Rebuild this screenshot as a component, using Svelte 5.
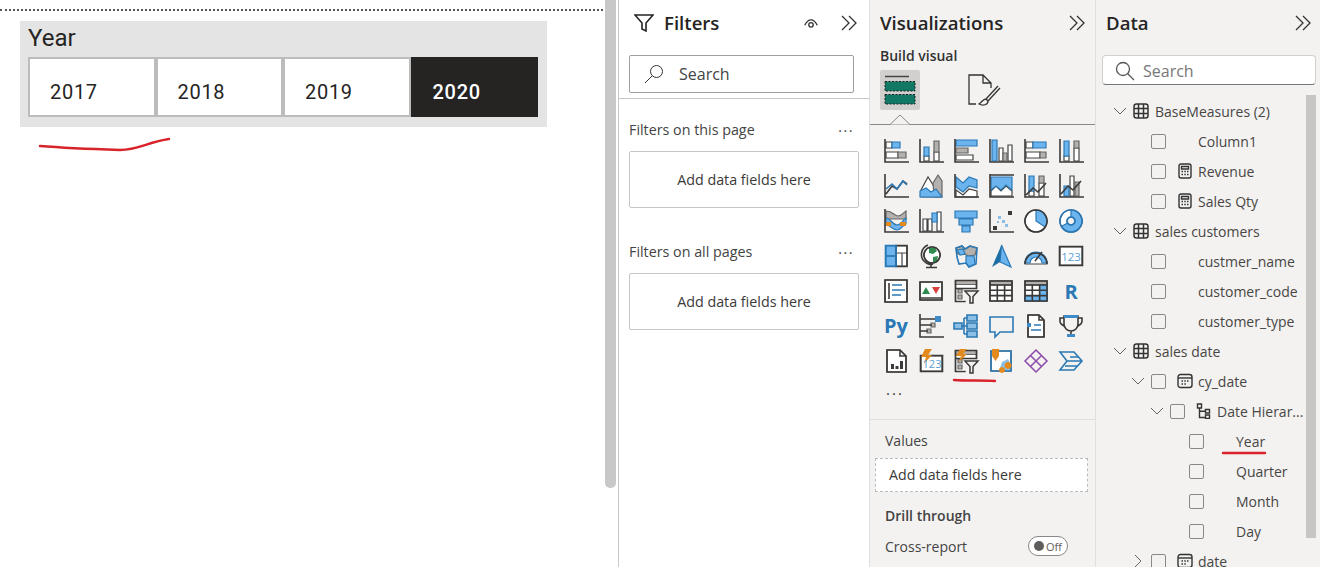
<script>
  const years = [
    { label: '2017', on: false },
    { label: '2018', on: false },
    { label: '2019', on: false },
    { label: '2020', on: true }
  ];

  const axis = 'M1 0v23h24';
  const slicer = 'M1.500 1.500h21v8h-21zM1.500 9.500v13h10';
  const slicerKeys = 'M1.500 1.500h21v4h-21zM4 10h4v4H4zM4 16h4v4H4z';
  const funnel = 'M11 12h13l-5 5.500v6.500h-3v-6.500z';

  // one entry per icon, the keys are the paint layers
  const icons = [
    { w: 'M2 3h6v6H2zM2 13h12v6H2z', b: 'M8 3h8v6H8z', g: 'M14 13h8v6h-8z', k: axis },
    { w: 'M5 17h5v5H5zM15 13h5v9h-5z', b: 'M5 8h5v9H5z', g: 'M15 2h5v11h-5z', k: axis },
    { w: 'M2 16h17v5H2z', b: 'M2 1h21v6H2z', g: 'M2 9h12v5H2z', k: axis },
    { w: 'M10 9h4v13h-4zM19 6h4v16h-4z', b: 'M3 1h5v21H3z', g: 'M14 14h4v8h-4z', k: axis },
    { w: 'M2 3h7v6H2zM2 13h14v6H2z', b: 'M9 3h13v6H9z', g: 'M16 13h6v6h-6z', k: axis },
    { w: 'M5 17h5v5H5zM15 9h5v13h-5z', b: 'M5 2h5v15H5z', g: 'M15 2h5v7h-5z', k: axis },

    { k: 'M1 0v23h24M2 20l6-8 5 3 6-8 4 3', t: 'M2 15l6-5 5 5 6-8 4 4' },
    { g: 'M14 9l5-8 4 6v16h-8z', w: 'M2 16L9 3l7 11 5 9H2z', b: 'M1 23v-6l6-3 5 4 5-3 6 8z' },
    { b: 'M2 3l7 6 6-6 8 3v8l-8-2-6 6-7-5z', w: 'M2 16l7 5 6-6 8 2v6H2z', k: 'M1 0v23h24' },
    { b: 'M2 3h21v13l-6-5-5 5-5-4-5 4z', w: 'M2 17l5-5 5 5 5-5 6 5v5H2z', k: 'M1 1h24M1 0v23h24' },
    { w: 'M5 17h5v5H5zM15 9h5v13h-5z', b: 'M5 2h5v15H5z', g: 'M15 2h5v7h-5z', k: 'M1 0v23h24M2 21l7-7 5 4 8-9' },
    { w: 'M11 2h4v20h-4z', b: 'M5 12h5v10H5z', g: 'M16 8h4v14h-4z', k: 'M1 0v23h24M2 20l7-8 5 4 8-9' },

    { g: 'M2 2c7 0 8 5 12 5s5-3 8-5v8H2z', b: 'M2 9c5 0 6 7 11 7s6-6 9-7v6c-3 1-5 6-9 6S6 16 2 16z', o: 'M2 13h5v4H2zM16 13h6v4h-6z', k: axis },
    { w: 'M4 10h4v12H4zM9 10h4v12H9zM18 3h4v19h-4z', b: 'M13 4h5v9h-5z', k: axis },
    { b: 'M1 2h22v7H1zM5 10h14v6H5zM8 17h8v6H8z' },
    { k: 'M1 0v23h24', f: 'M19 2h4v4h-4zM4 17h4v4H4z', l: 'M9 7h3v3H9zM13 11h3v3h-3zM16 15h3v3h-3zM8 12h2v2H8z' },
    { w: 'M12 1a11 11 0 1 0 11 11z', b: 'M12 1a11 11 0 0 1 9 17l-9-6z', k: 'M12 1a11 11 0 1 0 .01 0z' },
    { w: 'M12 1a11 11 0 1 0 .01 0zM12 8a4 4 0 1 0 .01 0z', b: 'M12 1a11 11 0 1 1-9.500 16.500l6-3.500a4 4 0 1 0 3.500-6z', t: 'M12 1a11 11 0 1 0 .01 0zM12 8a4 4 0 1 0 .01 0z' },

    { b: 'M2 2h10v10H2zM2 12h10v10H2z', w: 'M12 2h11v7H12zM12 9h6v13h-6zM18 9h5v13h-5z', k: 'M12 1.500h11v21H12z', t: 'M1.500 1.500H12v21H1.500zM1.500 12H12' },
    { w: 'M13 3a8 8 0 1 0 .01 0z', n: 'M10 4l6 0 2 3-4 3-4-1zM14 13l5-1-1 5-4 2z', k: 'M13 3a8 8 0 1 0 .01 0zM9 1a10 10 0 0 0-3 17c2 2 6 3 8 2M12 20v3M7 23.500h11' },
    { g: 'M2 4l6-2 3 3 5-3 7 2-2 7-7 1-5-3-6 1z', b: 'M12 12l8 0 1 8-6 3-3-4zM3 6l6-1 2 5-5 1z', t: 'M2 4l6-2 3 3 5-3 7 2-1 16-7 3-3-4-7 1-2-7z' },
    { a: 'M12.500 1L3 23l8-5z', b: 'M12.500 1L22 23l-11-5z' },
    { w: 'M1 20a11 11 0 1 1 22 0z', b: 'M1 19a11 11 0 0 1 22 0h-5a6 6 0 0 0-12 0z', k: 'M1 20a11 11 0 1 1 22 0M11 17l7-9' },
    { w: 'M1 3h22v18H1z', k: 'M.500 2.500h23v19H.500z', txt: '123', size: 11.500, x: 12, y: 16.500, cls: 'tl' },

    { w: 'M1 1h22v22H1z', t: 'M8 6h10M8 11h13M8 16h9', k: 'M1 1h22v22H1zM5 4v16' },
    { w: 'M1 3h22v18H1z', n: 'M3 15l4-7 4 7z', r: 'M13 8h8l-4 7z', k: 'M1 3h22v18H1zM1 19h22' },
    { w: slicer, g: slicerKeys, k: slicer, z: funnel },
    { w: 'M1 2h22v20H1z', g: 'M1 2h22v4H1z', k: 'M1 2h22v20H1zM1 6h22M1 11.300h22M1 16.600h22M8.300 6v16M15.600 6v16' },
    { w: 'M1 2h22v20H1z', g: 'M1 2h22v4H1z', b: 'M15.600 6H23v16h-7.400zM1 16.600h14.600V22H1z', k: 'M1 2h22v20H1zM1 6h22M1 11.300h22M1 16.600h22M8.300 6v16M15.600 6v16' },
    { txt: 'R', size: 20, x: 12, y: 19.500, cls: 'tb' },

    { txt: 'Py', size: 20, x: 12, y: 18.500, cls: 'tb' },
    { k: 'M1 0v23h24M1 5h15M1 11h12M1 17h8', q: 'M16 2h6v6h-6z', g: 'M12 9h4v4h-4zM8 15h4v4H8z' },
    { l: 'M0 9h8v6H0zM13 1h10v6H13zM13 9h10v6H13zM13 17h10v6H13z', t: 'M8 12h5M10 4v16M10 4h3M10 20h3M0 9h8v6H0zM13 1h10v6H13zM13 9h10v6H13zM13 17h10v6H13z' },
    { t: 'M1 3h23v15H11l-5 5v-5H1z' },
    { w: 'M4 1h11l5 5v17H4z', k: 'M4 1h11l5 5v17H4zM15 1v5h5', t: 'M10 11h7M7 16h10', q: 'M3 9h4v4H3z' },
    { k: 'M5 2h14v8a7 7 0 0 1-14 0zM5 4H1v3c0 3 2 4 4 5M19 4h4v3c0 3-2 4-4 5M12 17v3', q: 'M5 1h14v3H5zM8 20h8v3H8z' },

    { w: 'M3 1h13l6 6v16H3z', k: 'M3 1h13l6 6v16H3zM16 1v6h6', f: 'M7 15h3v5H7zM11.500 17h3v3h-3zM16 12h3v8h-3z' },
    { w: 'M2 7h21v15H2z', k: 'M1.500 6.500h22v16h-22z', txt: '123', size: 11, x: 13, y: 18.500, cls: 'tl', o: 'M6 0h7l-4 6h4L5 15l2-7H2z' },
    { w: slicer, g: slicerKeys, k: slicer, z: funnel, o: 'M6 0h7l-4 5h4L5 13l2-6H2z' },
    { w: 'M2 2h20v20H2z', l: 'M10 22l3-9 6-3 3 6v6z', t: 'M2 2h20v20H2z', o: 'M3 0h7v7l-3.500 5L3 7zM19 13a3.500 3.500 0 1 0 .01 0zM13 18a3 3 0 1 0 .01 0z' },
    { p: 'M12 1l11 11-11 11L1 12zM6.500 6.500l11 11M17.500 6.500l-11 11' },
    { t: 'M1 3h14l8 9-8 9H1l7-9zM8 12h15M11 8h8M6 17h12' }
  ];

  const tree = [
    { kind: 'table', name: 'BaseMeasures (2)' },
    { pad: 35, name: 'Column1' },
    { pad: 35, icon: 'calc', name: 'Revenue' },
    { pad: 35, icon: 'calc', name: 'Sales Qty' },
    { kind: 'table', name: 'sales customers' },
    { pad: 35, name: 'custmer_name' },
    { pad: 35, name: 'customer_code' },
    { pad: 35, name: 'customer_type' },
    { kind: 'table', name: 'sales date' },
    { pad: 35, open: true, icon: 'cal', name: 'cy_date' },
    { pad: 54, open: true, icon: 'hier', name: 'Date Hierar...' },
    { pad: 73, name: 'Year' },
    { pad: 73, name: 'Quarter' },
    { pad: 73, name: 'Month' },
    { pad: 73, name: 'Day' },
    { pad: 35, closed: true, icon: 'cal', name: 'date' }
  ];
</script>

{#snippet doubleChevron()}
  <svg class="collapse" viewBox="0 0 16 16">
    <path d="M1 1l7 7-7 7M8 1l7 7-7 7" />
  </svg>
{/snippet}

{#snippet zone(title)}
  <div class="zone-head">
    <span>{title}</span>
    <span class="more">...</span>
  </div>
  <div class="zone-box">Add data fields here</div>
{/snippet}

<div class="page">
  <section class="canvas">
    <div class="dotted"></div>
    <div class="slicer">
      <div class="slicer-title">Year</div>
      <div class="tiles">
        {#each years as y}
          <div class="tile" class:on={y.on}>{y.label}</div>
        {/each}
      </div>
    </div>
    <div class="canvas-scroll"></div>
  </section>

  <section class="filters">
    <div class="filters-top">
      <header class="head">
        <svg class="funnel" viewBox="0 0 20 20">
          <path d="M1 2h18l-7 8v8l-4-2v-6z" />
        </svg>
        <h2>Filters</h2>
        <svg class="eye" viewBox="0 0 18 12">
          <path d="M2 8c4-8 10-8 14 0" />
          <circle cx="9" cy="7.500" r="2.500" />
        </svg>
        {@render doubleChevron()}
      </header>
      <div class="filter-search">
        <svg viewBox="0 0 20 20">
          <circle cx="12.500" cy="7.500" r="6" />
          <path d="M8 12l-7 7" />
        </svg>
        <span>Search</span>
      </div>
    </div>
    {@render zone('Filters on this page')}
    {@render zone('Filters on all pages')}
  </section>

  <section class="viz">
    <header class="head">
      <h2>Visualizations</h2>
      {@render doubleChevron()}
    </header>
    <div class="build">Build visual</div>
    <div class="tabs">
      <div class="tab-on">
        <svg viewBox="0 0 32 32">
          <path class="tab-line" d="M1 2.500h24" />
          <rect class="tab-bar" x="1" y="7.500" width="30" height="9.500" />
          <rect class="tab-bar" x="1" y="20.500" width="30" height="9.500" />
        </svg>
      </div>
      <svg class="tab-format" viewBox="0 0 34 34">
        <path d="M9 31H2V2h14l8 8v5M16 2v8h8" />
        <path d="M31 13L19 26M33 15L21 28M19 26c-3 0-4 3-7 5 4 2 9 1 9-3z" />
      </svg>
      <svg class="notch" viewBox="0 0 22 11">
        <path d="M0 10.500h1L11 1l10 9.500h1" />
      </svg>
    </div>

    <div class="gallery">
      {#each icons as ic}
        <svg viewBox="0 0 24 24">
          {#if ic.w}<path class="w" d={ic.w} />{/if}
          {#if ic.g}<path class="g" d={ic.g} />{/if}
          {#if ic.b}<path class="b" d={ic.b} />{/if}
          {#if ic.a}<path class="a" d={ic.a} />{/if}
          {#if ic.l}<path class="l" d={ic.l} />{/if}
          {#if ic.n}<path class="n" d={ic.n} />{/if}
          {#if ic.r}<path class="r" d={ic.r} />{/if}
          {#if ic.k}<path class="k" d={ic.k} />{/if}
          {#if ic.z}<path class="z" d={ic.z} />{/if}
          {#if ic.f}<path class="f" d={ic.f} />{/if}
          {#if ic.t}<path class="t" d={ic.t} />{/if}
          {#if ic.q}<path class="q" d={ic.q} />{/if}
          {#if ic.p}<path class="p" d={ic.p} />{/if}
          {#if ic.o}<path class="o" d={ic.o} />{/if}
          {#if ic.txt}<text class={ic.cls} x={ic.x} y={ic.y} font-size={ic.size}>{ic.txt}</text>{/if}
        </svg>
      {/each}
    </div>
    <div class="gallery-more">...</div>

    <div class="wells">
      <div class="well-label">Values</div>
      <div class="well">Add data fields here</div>
      <div class="drill">Drill through</div>
      <div class="cross">
        <span>Cross-report</span>
        <span class="toggle"><i></i>Off</span>
      </div>
    </div>
  </section>

  <section class="data">
    <header class="head">
      <h2>Data</h2>
      {@render doubleChevron()}
    </header>
    <div class="data-search">
      <svg viewBox="0 0 20 20">
        <circle cx="8" cy="8" r="6.500" />
        <path d="M12.500 12.500l6.500 6.500" />
      </svg>
      <span>Search</span>
    </div>
    <div class="tree">
      {#each tree as row}
        {#if row.kind === 'table'}
          <div class="row row-table">
            <svg class="chev" viewBox="0 0 14 8"><path d="M1 1l6 6 6-6" /></svg>
            <svg class="table-ic" viewBox="0 0 16 16">
              <rect x="1" y="1" width="14" height="14" rx="2.500" />
              <path d="M5.500 1v14M10.500 1v14M1 5.500h14M1 10.500h14" />
            </svg>
            <span>{row.name}</span>
          </div>
        {:else}
          <div class="row" style="padding-left: {row.pad}px">
            <span class="chev-slot">
              {#if row.open}
                <svg class="chev" viewBox="0 0 14 8"><path d="M1 1l6 6 6-6" /></svg>
              {:else if row.closed}
                <svg class="chev-r" viewBox="0 0 8 14"><path d="M1 1l6 6-6 6" /></svg>
              {/if}
            </span>
            <span class="check"></span>
            <span class="field-ic">
              {#if row.icon === 'calc'}
                <svg viewBox="0 0 16 16">
                  <rect x="2" y="1" width="12" height="14" rx="2" />
                  <path d="M4.500 3.500h7v2.500h-7z" />
                  <path class="dots" d="M4.500 8.500h1.500M7.300 8.500h1.500M10 8.500h1.500M4.500 11.500h1.500M7.300 11.500h1.500M10 11.500h1.500" />
                </svg>
              {:else if row.icon === 'cal'}
                <svg viewBox="0 0 16 16">
                  <rect x="1" y="1.500" width="14" height="13" rx="2.500" />
                  <path d="M1 5h14" />
                  <path class="dots" d="M4.500 8h1.500M7.300 8h1.500M10 8h1.500M4.500 11h1.500M7.300 11h1.500" />
                </svg>
              {:else if row.icon === 'hier'}
                <svg viewBox="0 0 16 16">
                  <path d="M1.500 1h4v4h-4zM9.500 6.500h4v3.500h-4zM9.500 12h4v3.500h-4zM3.500 5v9.500h6M3.500 8.200h6" />
                </svg>
              {/if}
            </span>
            <span>{row.name}</span>
          </div>
        {/if}
      {/each}
    </div>
    <div class="data-scroll"></div>
  </section>

  <svg class="ink" viewBox="0 0 1320 567">
    <path d="M40 146c25 2 50 3 80 4 18 0 28-8 49-11" />
    <path d="M954 380c14 1 28 0 41 1" />
    <path d="M1223 453h42" />
  </svg>
</div>

<style>
  :global(body) {
    margin: 0;
    background: #fff;
  }

  .page {
    position: relative;
    width: 1320px;
    height: 567px;
    overflow: hidden;
    display: grid;
    grid-template-columns: 619px 251px 226px 224px;
    font-family: "Open Sans", "Noto Sans", sans-serif;
    color: #3b3a39;
    font-size: 14px;
  }

  section {
    position: relative;
    height: 567px;
    box-sizing: border-box;
  }

  .head {
    display: flex;
    align-items: center;
    height: 46px;
  }

  h2 {
    margin: -2px 0 0;
    font-size: 18.600px;
    font-weight: 600;
    color: #252423;
  }

  .collapse {
    width: 16px;
    height: 16px;
    fill: none;
    stroke: #333;
    stroke-width: 1.300;
    flex: none;
  }

  /* canvas */
  .canvas {
    background: #fff;
    border-right: 1px solid #c8c8c8;
    padding-left: 20px;
  }

  .dotted {
    margin: 9px 0 10px -20px;
    width: 603px;
    border-top: 2px dotted #555;
    height: 0;
  }

  .slicer {
    width: 527px;
    height: 106px;
    background: #e4e4e4;
    box-sizing: border-box;
    padding: 0 9px 0 8px;
  }

  .slicer-title {
    height: 36px;
    line-height: 34px;
    font-family: Roboto, sans-serif;
    font-size: 24px;
    color: #252423;
  }

  .tiles {
    display: grid;
    grid-template-columns: repeat(4, 1fr);
  }

  .tile {
    height: 60px;
    box-sizing: border-box;
    border: 2px solid #bcbcbc;
    background: #fff;
    padding-left: 20px;
    line-height: 67px;
    font-family: Roboto, sans-serif;
    font-size: 20px;
    letter-spacing: 0.700px;
    color: #252423;
  }

  .tile.on {
    background: #252423;
    border-color: #252423;
    color: #fff;
    font-weight: 500;
  }

  .canvas-scroll {
    position: absolute;
    left: 605px;
    top: 0;
    width: 11px;
    height: 488px;
    background: #c8c8c8;
    border-radius: 0 0 5px 5px;
  }

  /* filters */
  .filters {
    background: #fff;
    border-right: 1px solid #e1dfdd;
  }

  .filters-top {
    height: 99px;
    box-sizing: border-box;
    border-bottom: 1px solid #c8c6c4;
    padding: 0 12px 0 15px;
  }

  .funnel {
    width: 20px;
    height: 20px;
    margin-right: 10px;
    fill: none;
    stroke: #252423;
    stroke-width: 1.600;
  }

  .filters h2 {
    flex: 1;
  }

  .eye {
    width: 16px;
    height: 11px;
    margin-right: 22px;
    fill: none;
    stroke: #333;
    stroke-width: 1.500;
  }

  .filter-search {
    display: flex;
    align-items: center;
    gap: 15px;
    margin: 9px 0 0 -5px;
    width: 225px;
    height: 38px;
    box-sizing: border-box;
    border: 1px solid #a19f9d;
    border-radius: 2px;
    padding-left: 14px;
    font-size: 16px;
    color: #444;
  }

  .filter-search svg {
    width: 20px;
    height: 20px;
    fill: none;
    stroke: #333;
  }

  .zone-head {
    display: flex;
    justify-content: space-between;
    align-items: center;
    height: 20px;
    margin: 20px 15px 12px 10px;
    color: #444;
    font-size: 14.300px;
  }

  .zone-head + .zone-box + .zone-head {
    margin-top: 33px;
  }

  .more {
    letter-spacing: 1.500px;
    line-height: 8px;
    height: 12px;
  }

  .zone-box {
    margin-left: 10px;
    width: 230px;
    height: 57px;
    box-sizing: border-box;
    border: 1px solid #c8c6c4;
    border-radius: 2px;
    display: flex;
    align-items: center;
    justify-content: center;
    font-size: 14.300px;
  }

  /* visualizations */
  .viz {
    background: #f3f2f1;
    border-right: 1px solid #e1dfdd;
    padding: 0;
  }

  .viz .head {
    padding: 0 10px;
    justify-content: space-between;
  }

  .build {
    margin-left: 10px;
    height: 20px;
    line-height: 20px;
    font-weight: 600;
    color: #333;
  }

  .tabs {
    position: relative;
    display: flex;
    align-items: flex-start;
    gap: 47px;
    height: 55px;
    margin: 4px 0 0;
    padding-left: 10px;
    box-sizing: border-box;
    border-bottom: 1px solid #8a8886;
  }

  .tab-on {
    width: 40px;
    height: 40px;
    background: #d2d0ce;
    border-radius: 2px;
    display: flex;
    align-items: center;
    justify-content: center;
  }

  .tab-on svg {
    width: 32px;
    height: 32px;
  }

  .tab-line {
    stroke: #444;
    stroke-width: 1.500;
  }

  .tab-bar {
    fill: #117865;
    stroke: #222;
    stroke-dasharray: 2 1.500;
  }

  .tab-format {
    width: 34px;
    height: 34px;
    margin-top: 3px;
    fill: none;
    stroke: #333;
    stroke-width: 1.300;
  }

  .notch {
    position: absolute;
    left: 19px;
    bottom: -1px;
    width: 22px;
    height: 11px;
    fill: #f3f2f1;
    stroke: #8a8886;
  }

  .gallery {
    display: grid;
    grid-template-columns: repeat(6, 35px);
    grid-auto-rows: 35px;
    justify-items: center;
    align-items: center;
    margin: 8px 0 0 8px;
  }

  .gallery svg {
    width: 24px;
    height: 24px;
    overflow: visible;
  }

  .gallery path {
    stroke-width: 1.200;
    fill: none;
    fill-rule: evenodd;
  }

  .gallery .w { fill: #fff; stroke: #444; }
  .gallery .g { fill: #b3b0ad; stroke: #666; }
  .gallery .b { fill: #6cb4ee; stroke: #2b79b5; }
  .gallery .a { fill: #1c6ea4; stroke: none; }
  .gallery .l { fill: #8cbfe6; stroke: none; }
  .gallery .n { fill: #2f8c4e; stroke: none; }
  .gallery .r { fill: #d9413d; stroke: none; }
  .gallery .k { stroke: #3b3a39; stroke-width: 1.600; }
  .gallery .z { fill: #f3f2f1; stroke: #3b3a39; stroke-width: 1.500; }
  .gallery .f { fill: #3b3a39; stroke: none; }
  .gallery .t { stroke: #2b79b5; stroke-width: 1.600; }
  .gallery .q { fill: #3d8cc9; stroke: none; }
  .gallery .p { stroke: #8a4aa8; stroke-width: 1.500; }
  .gallery .o { fill: #e28a1e; stroke: none; }

  .tl,
  .tb {
    text-anchor: middle;
    font-family: "Open Sans", sans-serif;
  }

  .tl {
    fill: #5a9fd4;
  }

  .tb {
    fill: #2a78b5;
    font-weight: 700;
  }

  .gallery-more {
    margin-left: 16px;
    height: 30px;
    line-height: 22px;
    font-size: 15px;
    letter-spacing: 2px;
    color: #333;
  }

  .wells {
    margin-top: 11px;
    border-top: 1px solid #e1dfdd;
    padding: 11px 7px 0 5px;
  }

  .well-label {
    height: 20px;
    line-height: 20px;
    margin-left: 10px;
    color: #444;
  }

  .well {
    margin-top: 7px;
    height: 34px;
    width: 213px;
    box-sizing: border-box;
    background: #fff;
    border: 1px dashed #bbb;
    padding-left: 13px;
    line-height: 32px;
    font-size: 14.200px;
  }

  .drill {
    margin: 14px 0 0 10px;
    height: 20px;
    line-height: 20px;
    font-weight: 600;
    color: #444;
  }

  .cross {
    display: flex;
    justify-content: space-between;
    align-items: center;
    margin: 10px 20px 0 10px;
    height: 20px;
    color: #444;
  }

  .toggle {
    display: flex;
    align-items: center;
    gap: 2px;
    width: 40px;
    height: 20px;
    box-sizing: border-box;
    border: 1px solid #8a8886;
    border-radius: 10px;
    padding-left: 5px;
    background: #fff;
    font-size: 11px;
    color: #605e5c;
  }

  .toggle i {
    width: 10px;
    height: 10px;
    border-radius: 50%;
    background: #605e5c;
  }

  /* data */
  .data {
    background: #f3f2f1;
  }

  .data .head {
    padding: 0 9px 0 10px;
    justify-content: space-between;
  }

  .data-search {
    display: flex;
    align-items: center;
    gap: 8px;
    margin: 9px 0 0 6px;
    width: 214px;
    height: 30px;
    box-sizing: border-box;
    background: #fff;
    border: 1px solid #d2d0ce;
    border-bottom-color: #777;
    border-radius: 4px;
    padding: 2px 0 0 12px;
    font-size: 16px;
    color: #777;
  }

  .data-search svg {
    width: 20px;
    height: 20px;
    fill: none;
    stroke: #555;
    stroke-width: 1.300;
  }

  .tree {
    margin-top: 11px;
  }

  .row {
    display: flex;
    align-items: center;
    height: 30px;
    white-space: nowrap;
    color: #484644;
  }

  .row-table {
    padding-left: 17px;
  }

  .row-table .chev {
    margin-right: 6px;
  }

  .chev {
    width: 14px;
    height: 8px;
    fill: none;
    stroke: #666;
    flex: none;
  }

  .chev-r {
    width: 8px;
    height: 14px;
    fill: none;
    stroke: #666;
    margin-left: 3px;
  }

  .chev-slot {
    width: 20px;
    flex: none;
    display: flex;
    align-items: center;
  }

  .table-ic {
    width: 16px;
    height: 16px;
    margin-right: 6px;
    fill: none;
    stroke: #333;
    stroke-width: 1.500;
    flex: none;
  }

  .check {
    width: 15px;
    height: 15px;
    box-sizing: border-box;
    border: 1px solid #8a8886;
    border-radius: 2px;
    flex: none;
    margin-right: 11px;
  }

  .field-ic {
    width: 21px;
    flex: none;
    display: flex;
  }

  .field-ic svg {
    width: 16px;
    height: 16px;
    fill: none;
    stroke: #333;
    stroke-width: 1.400;
  }

  .field-ic .dots {
    stroke-width: 1.300;
    stroke-dasharray: 1 0;
  }

  .data-scroll {
    position: absolute;
    left: 210px;
    top: 95px;
    width: 10px;
    height: 443px;
    background: #c8c6c4;
  }

  .ink {
    position: absolute;
    left: 0;
    top: 0;
    width: 1320px;
    height: 567px;
    pointer-events: none;
    fill: none;
    stroke: #d8232a;
    stroke-width: 2.400;
    stroke-linecap: round;
  }
</style>
